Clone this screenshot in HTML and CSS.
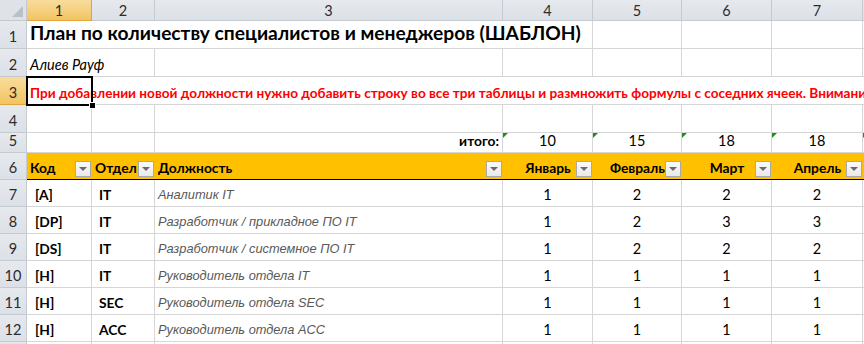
FILE: index.html
```html
<!DOCTYPE html>
<html lang="ru">
<head>
<meta charset="utf-8">
<title>План по количеству специалистов</title>
<link rel="stylesheet" href="styles.css">
</head>
<body>
<div class="sheet">
  <div class="corner"><span class="corner-tri"></span></div>
  <div class="ch sel">1</div>
  <div class="ch">2</div>
  <div class="ch">3</div>
  <div class="ch">4</div>
  <div class="ch">5</div>
  <div class="ch">6</div>
  <div class="ch">7</div>
  <div class="ch"></div>

  <div class="rh">1</div>
  <div class="c span4 title">План по количеству специалистов и менеджеров (ШАБЛОН)</div>
  <div class="c"></div><div class="c"></div><div class="c"></div><div class="c"></div>

  <div class="rh">2</div>
  <div class="c span2 author">Алиев Рауф</div>
  <div class="c"></div><div class="c"></div><div class="c"></div><div class="c"></div><div class="c"></div><div class="c"></div>

  <div class="rh sel">3</div>
  <div class="c span8 note"><span class="note-text">При добавлении новой должности нужно добавить строку во все три таблицы и размножить формулы с соседних ячеек. Внимани</span></div>

  <div class="rh">4</div>
  <div class="c"></div><div class="c"></div><div class="c"></div><div class="c"></div><div class="c"></div><div class="c"></div><div class="c"></div><div class="c"></div>

  <div class="rh">5</div>
  <div class="c"></div><div class="c"></div>
  <div class="c right bold">итого:</div>
  <div class="c num flag">10</div>
  <div class="c num flag">15</div>
  <div class="c num flag">18</div>
  <div class="c num flag">18</div>
  <div class="c flag"></div>

  <div class="rh">6</div>
  <div class="c hdr">Код<span class="fbtn"></span></div>
  <div class="c hdr">Отдел<span class="fbtn"></span></div>
  <div class="c hdr">Должность<span class="fbtn"></span></div>
  <div class="c hdr num">Январь<span class="fbtn"></span></div>
  <div class="c hdr num">Февраль<span class="fbtn"></span></div>
  <div class="c hdr num">Март<span class="fbtn"></span></div>
  <div class="c hdr num">Апрель<span class="fbtn"></span></div>
  <div class="c hdr"></div>

  <div class="rh">7</div>
  <div class="c code">[A]</div><div class="c dept">IT</div><div class="c pos">Аналитик IT</div>
  <div class="c num">1</div><div class="c num">2</div><div class="c num">2</div><div class="c num">2</div><div class="c"></div>

  <div class="rh">8</div>
  <div class="c code">[DP]</div><div class="c dept">IT</div><div class="c pos">Разработчик / прикладное ПО IT</div>
  <div class="c num">1</div><div class="c num">2</div><div class="c num">3</div><div class="c num">3</div><div class="c"></div>

  <div class="rh">9</div>
  <div class="c code">[DS]</div><div class="c dept">IT</div><div class="c pos">Разработчик / системное ПО IT</div>
  <div class="c num">1</div><div class="c num">2</div><div class="c num">2</div><div class="c num">2</div><div class="c"></div>

  <div class="rh">10</div>
  <div class="c code">[H]</div><div class="c dept">IT</div><div class="c pos">Руководитель отдела IT</div>
  <div class="c num">1</div><div class="c num">1</div><div class="c num">1</div><div class="c num">1</div><div class="c"></div>

  <div class="rh">11</div>
  <div class="c code">[H]</div><div class="c dept">SEC</div><div class="c pos">Руководитель отдела SEC</div>
  <div class="c num">1</div><div class="c num">1</div><div class="c num">1</div><div class="c num">1</div><div class="c"></div>

  <div class="rh">12</div>
  <div class="c code">[H]</div><div class="c dept">ACC</div><div class="c pos">Руководитель отдела ACC</div>
  <div class="c num">1</div><div class="c num">1</div><div class="c num">1</div><div class="c num">1</div><div class="c"></div>

  <div class="rh"></div>
  <div class="c"></div><div class="c"></div><div class="c"></div><div class="c"></div><div class="c"></div><div class="c"></div><div class="c"></div><div class="c"></div>

  <div class="selection"><span class="handle"></span></div>
</div>
</body>
</html>
```

FILE: styles.css
```css
html, body {
  margin: 0;
  padding: 0;
  background: #fff;
}
body {
  width: 864px;
  height: 344px;
  overflow: hidden;
  font-family: Lato, "Noto Sans", sans-serif;
  font-size: 14.5px;
  color: #000;
}
.sheet {
  position: relative;
  display: grid;
  grid-template-columns: 27px 65px 63px 348px 90px 89px 90px 91px 40px;
  grid-template-rows: 21px 28px 28px 28px 28px 20px 27px 27px 27px 27px 27px 27px 27px;
  width: 864px;
  height: 344px;
  overflow: hidden;
}
.corner {
  position: relative;
  background: #dfe3e8;
  border-right: 1px solid #c5cad1;
  border-bottom: 1px solid #c5cad1;
  box-sizing: border-box;
}
.corner-tri {
  position: absolute;
  right: 3px;
  bottom: 3px;
  width: 0;
  height: 0;
  border-left: 11px solid transparent;
  border-bottom: 11px solid #b9bfc7;
}
.ch, .rh {
  box-sizing: border-box;
  background: linear-gradient(#e6e9ee, #dce1e7);
  border-right: 1px solid #c5cad1;
  border-bottom: 1px solid #c5cad1;
  color: #2b2b2b;
  font-size: 14.5px;
  display: flex;
  justify-content: center;
  align-items: center;
}
.rh {
  align-items: flex-end;
  padding-bottom: 3px;
}
.ch.sel, .rh.sel {
  background: linear-gradient(#f9dc9c, #f2c462);
  border-right-color: #e3a53a;
  border-bottom-color: #e3a53a;
}
.c {
  position: relative;
  box-sizing: border-box;
  border-right: 1px solid #d6d6d6;
  border-bottom: 1px solid #d6d6d6;
  display: flex;
  align-items: flex-end;
  padding: 0 3px 3px 3px;
  white-space: nowrap;
  min-width: 0;
}
.span2 { grid-column: span 2; }
.span4 { grid-column: span 4; }
.span8 { grid-column: span 8; border-right: none; }
.title {
  font-weight: bold;
  font-size: 19.2px;
  padding-bottom: 4px;
  padding-left: 3px;
}
.author {
  font-style: italic;
  padding-bottom: 3px;
}
.note {
  color: #ff0000;
  font-weight: bold;
  font-size: 13.6px;
  padding-bottom: 3px;
}
.note-text {
  display: block;
}
.right { justify-content: flex-end; }
.bold { font-weight: bold; font-size: 13.8px; }
.num { justify-content: center; }
.flag::before {
  content: "";
  position: absolute;
  left: 0;
  top: 0;
  width: 0;
  height: 0;
  border-top: 5px solid #1d8f1d;
  border-right: 5px solid transparent;
}
.hdr {
  background: #ffc000;
  border-right: none;
  border-bottom: 1px solid #000;
  font-weight: bold;
  font-size: 13.8px;
  padding-bottom: 3px;
}
.fbtn {
  position: absolute;
  right: 1px;
  bottom: 2px;
  width: 16px;
  height: 16px;
  box-sizing: border-box;
  border: 1px solid #a9a9a9;
  background: linear-gradient(#fbfbfb, #e9e9e9);
}
.fbtn::after {
  content: "";
  position: absolute;
  left: 3px;
  top: 5px;
  width: 0;
  height: 0;
  border-left: 4px solid transparent;
  border-right: 4px solid transparent;
  border-top: 4px solid #6b6b6b;
}
.code {
  font-weight: bold;
  font-size: 13.8px;
  padding-left: 8px;
}
.dept {
  font-weight: bold;
  font-size: 13.8px;
  padding-left: 7px;
}
.pos {
  font-family: "Liberation Sans", Arial, sans-serif;
  font-style: italic;
  font-size: 12.8px;
  color: #595959;
  padding-bottom: 4px;
}
.selection {
  position: absolute;
  left: 26px;
  top: 76px;
  width: 67px;
  height: 30px;
  box-sizing: border-box;
  border: 2px solid #000;
  pointer-events: none;
}
.handle {
  position: absolute;
  right: -5px;
  bottom: -5px;
  width: 5px;
  height: 5px;
  background: #000;
  border: 1px solid #fff;
}
```
